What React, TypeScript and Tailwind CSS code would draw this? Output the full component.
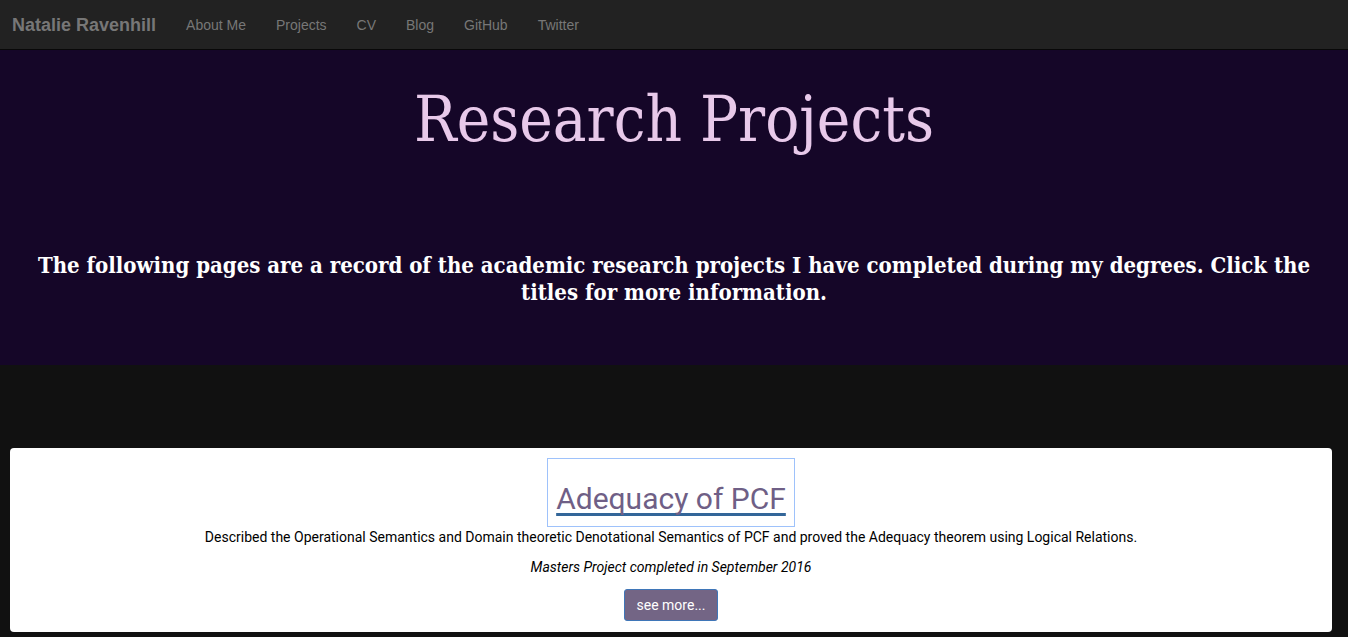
export default function App() {
  const links = ["About Me", "Projects", "CV", "Blog", "GitHub", "Twitter"];
  return (
    <div className="min-h-[637px] bg-[#111111] font-['Roboto',sans-serif]">
      {/* Navbar */}
      <nav className="flex h-[50px] items-center border-b border-[#080808] bg-[#222222] px-[12px] pt-[2px] font-['Liberation_Sans',Arial,sans-serif]">
        <span className="mr-[30px] text-[18px] font-bold text-[#777777]">Natalie Ravenhill</span>
        <ul className="flex gap-[30px] text-[14px] text-[#777777]">
          {links.map((l) => (
            <li key={l}>{l}</li>
          ))}
        </ul>
      </nav>

      {/* Hero */}
      <header className="flex h-[315px] flex-col items-center bg-[#150628] px-[20px] text-center font-['DejaVu_Serif_Condensed','DejaVu_Serif',serif]">
        <h1 className="mt-[30px] text-[63px] leading-[80px] text-[#e8c9ea]">Research Projects</h1>
        <p className="mt-[92px] text-[22px] font-bold leading-[27px] text-white">
          The following pages are a record of the academic research projects I have completed during my degrees. Click the
          titles for more information.
        </p>
      </header>

      {/* Projects */}
      <main className="pt-[83px] pl-[10px] pr-[16px]">
        <section className="flex flex-col items-center rounded-[4px] bg-white pt-[10px] pb-[11px] text-center">
          <a
            href="#"
            className="block border border-[#9ec2fb] px-[8px] pt-[22px] pb-[9px] text-[30px] leading-[36px] text-[#6f5f86] underline decoration-[#336699] decoration-[3px] underline-offset-[4px] [text-decoration-skip-ink:none]"
          >
            Adequacy of PCF
          </a>
          <p className="text-[14px] leading-[20px] text-black">
            Described the Operational Semantics and Domain theoretic Denotational Semantics of PCF and proved the Adequacy theorem using Logical Relations.
          </p>
          <p className="mt-[10px] text-[14px] leading-[20px] italic text-black">Masters Project completed in September 2016</p>
          <button className="mt-[12px] rounded-[3px] border border-[#3f76b8] bg-[#736585] px-[12px] py-[5px] text-[14px] leading-[20px] text-white">
            see more...
          </button>
        </section>
      </main>
    </div>
  );
}
